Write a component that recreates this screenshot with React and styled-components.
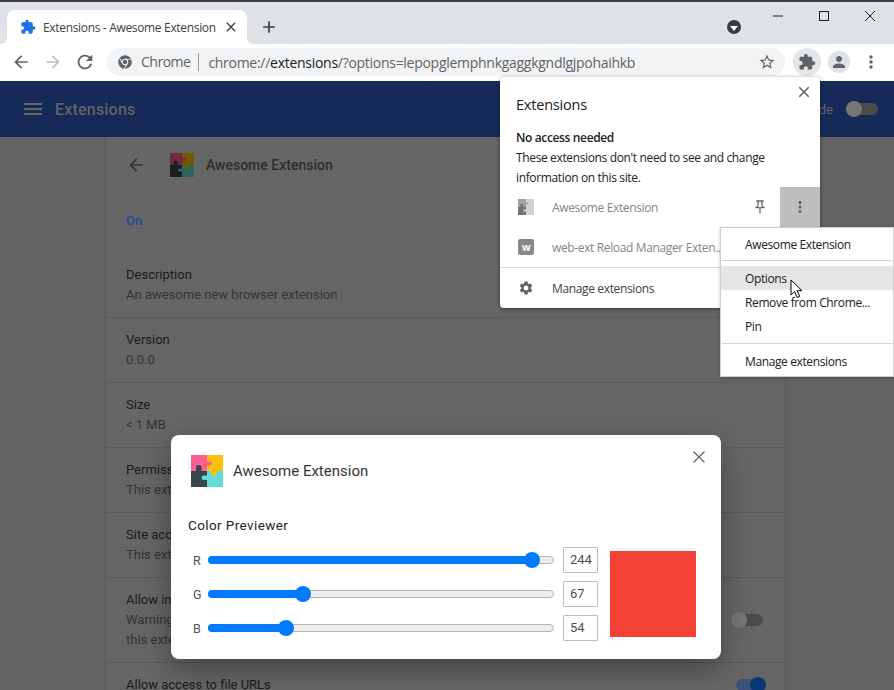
import styled, { createGlobalStyle } from "styled-components";
import { FaChrome } from "react-icons/fa";
import {
  MdAdd,
  MdArrowBack,
  MdArrowForward,
  MdClose,
  MdExtension,
  MdMenu,
  MdMoreVert,
  MdOutlinePushPin,
  MdPerson,
  MdRefresh,
  MdSettings,
  MdStarBorder,
} from "react-icons/md";
import { X } from "lucide-react";

const UI_FONT = `"Open Sans", "Noto Sans", sans-serif`;
const PAGE_FONT = `Roboto, "Liberation Sans", sans-serif`;

const GlobalStyle = createGlobalStyle`
  html, body {
    margin: 0;
    padding: 0;
    overflow: hidden;
    background: #666;
  }
  * {
    box-sizing: border-box;
  }
`;

const Window = styled.div`
  position: relative;
  width: 894px;
  height: 690px;
  overflow: hidden;
  display: flex;
  flex-direction: column;
  font-family: ${UI_FONT};
`;

const TabStrip = styled.div`
  height: 44px;
  flex: none;
  background: #dee1e6;
  border-top: 2px solid #3f3f3f;
  display: flex;
  align-items: flex-end;
  padding: 0 1px 0 7px;
`;

const Tab = styled.div`
  position: relative;
  width: 240px;
  height: 34px;
  background: #fff;
  border-radius: 8px 8px 0 0;
  display: flex;
  align-items: center;
  padding: 0 8px 0 13px;
  gap: 7px;
  color: #3c4043;

  svg {
    flex: none;
  }

  &::before,
  &::after {
    content: "";
    position: absolute;
    bottom: 0;
    width: 7px;
    height: 7px;
  }
  &::before {
    left: -7px;
    background: radial-gradient(circle at 0 0, transparent 7px, #fff 7.5px);
  }
  &::after {
    right: -7px;
    background: radial-gradient(circle at 100% 0, transparent 7px, #fff 7.5px);
  }
`;

const TabTitle = styled.span`
  flex: 1;
  min-width: 0;
  font-size: 12px;
  letter-spacing: -0.33px;
  white-space: nowrap;
  color: #3c4043;
`;

const NewTab = styled.div`
  margin-left: 12px;
  height: 34px;
  display: flex;
  align-items: center;
  color: #3c4043;
`;

const StripSpacer = styled.div`
  flex: 1;
`;

const ProfileDrop = styled.div`
  width: 14px;
  height: 14px;
  border-radius: 50%;
  background: #3c3c3c;
  margin: 0 0 10px;
  display: flex;
  align-items: center;
  justify-content: center;

  &::after {
    content: "";
    margin-top: 2px;
    border-left: 4px solid transparent;
    border-right: 4px solid transparent;
    border-top: 5px solid #fff;
  }
`;

const WindowControls = styled.div`
  align-self: flex-start;
  margin-left: 14px;
  display: flex;
`;

const WindowButton = styled.div`
  width: 46px;
  height: 28px;
  display: flex;
  align-items: center;
  justify-content: center;
  color: #1f1f1f;
`;

const Toolbar = styled.div`
  height: 37px;
  flex: none;
  background: #fff;
  display: flex;
  align-items: flex-start;
  padding: 4px 0 0 5px;
`;

const NavButton = styled.div`
  width: 32px;
  height: 28px;
  display: flex;
  align-items: center;
  justify-content: center;
  color: ${(p) => (p.$disabled ? "#bcbfc3" : "#5f6368")};
`;

const Omnibox = styled.div`
  width: 678px;
  height: 28px;
  margin-left: 6px;
  border-radius: 14px;
  background: #f1f3f4;
  display: flex;
  align-items: center;
  padding: 0 9px 0 11px;
  font-size: 14px;
  color: #5f6368;
  white-space: nowrap;
`;

const Origin = styled.span`
  margin-left: 9px;
  padding-right: 8px;
  border-right: 1px solid #9aa0a6;
  line-height: 18px;
  letter-spacing: -0.5px;
`;

const Url = styled.span`
  margin-left: 9px;
  flex: 1;
  letter-spacing: -0.28px;
`;

const UrlStrong = styled.span`
  color: #202124;
`;

const ToolbarActions = styled.div`
  display: flex;
  align-items: center;
  margin-left: 8px;
`;

const ActiveAction = styled.div`
  width: 28px;
  height: 28px;
  border-radius: 50%;
  background: #e4e5e7;
  display: flex;
  align-items: center;
  justify-content: center;
  color: #5f6368;
`;

const Avatar = styled.div`
  width: 22px;
  height: 22px;
  margin-left: 7px;
  border-radius: 50%;
  background: #dee1e6;
  color: #5f6368;
  display: flex;
  align-items: center;
  justify-content: center;
`;

const MenuDots = styled.div`
  margin-left: 11px;
  width: 20px;
  display: flex;
  justify-content: center;
  color: #5f6368;
`;

const Page = styled.div`
  flex: 1;
  min-height: 0;
  display: flex;
  flex-direction: column;
  background: #636363;
  font-family: ${PAGE_FONT};
`;

const PageHeader = styled.header`
  height: 56px;
  flex: none;
  background: #152a58;
  display: flex;
  align-items: center;
  padding: 0 16px 0 21px;
  color: #666;
`;

const PageTitle = styled.h1`
  margin: 0 0 0 10px;
  font-size: 16px;
  font-weight: 500;
  letter-spacing: 0.2px;
  color: #626366;
`;

const HeaderSpacer = styled.div`
  flex: 1;
`;

const DevMode = styled.span`
  font-size: 13px;
  margin-right: 15px;
  color: #66676a;
`;

const Toggle = styled.div`
  position: relative;
  width: 30px;
  height: 12px;
  border-radius: 6px;
  background: ${(p) => (p.$on ? "#3c5278" : "#4a4b4c")};

  &::after {
    content: "";
    position: absolute;
    top: -2px;
    left: ${(p) => (p.$on ? "14px" : "-2px")};
    width: 16px;
    height: 16px;
    border-radius: 50%;
    background: ${(p) => (p.$on ? "#0c3776" : "#777")};
  }
`;

const Card = styled.main`
  width: 681px;
  margin-left: 105px;
  flex: 1;
  background: #666;
  border-left: 1px solid #5a5a5a;
  border-right: 1px solid #5a5a5a;
  overflow: hidden;
`;

const DetailTop = styled.div`
  height: 56px;
  display: flex;
  align-items: center;
  padding-left: 20px;
  color: #333436;
`;

const DetailIcon = styled.div`
  margin-left: 24px;
  width: 24px;
  height: 24px;
  filter: brightness(0.45);
`;

const DetailName = styled.div`
  margin-left: 12px;
  font-size: 14px;
  font-weight: 500;
  color: #2c2d2f;
`;

const Status = styled.div`
  height: 72px;
  padding: 18px 20px 0;
  font-size: 13px;
  line-height: 20px;
  font-weight: 500;
  color: #2a4a96;
`;

const Row = styled.section`
  display: flex;
  align-items: center;
  gap: 20px;
  padding: ${(p) => (p.$first ? "0" : "12px")} 20px 12px;
  border-bottom: 1px solid #5b5b5b;
  font-size: 13px;
  line-height: 20px;
`;

const RowText = styled.div`
  width: ${(p) => p.$width || 590}px;
  flex: none;
`;

const RowLabel = styled.div`
  color: #1a1b1d;
  white-space: nowrap;
`;

const RowValue = styled.div`
  color: #333436;
  white-space: nowrap;
`;

const Dialog = styled.div`
  position: absolute;
  left: 171px;
  top: 435px;
  width: 550px;
  height: 224px;
  background: #fff;
  border-radius: 8px;
  box-shadow: 0 10px 30px rgba(0, 0, 0, 0.35);
  padding: 20px 25px 0 17px;
  font-family: ${PAGE_FONT};
`;

const DialogClose = styled.div`
  position: absolute;
  top: 12px;
  right: 12px;
  color: #666;
  display: flex;
`;

const DialogHead = styled.div`
  display: flex;
  align-items: center;
  gap: 10px;
  padding-left: 3px;
`;

const DialogTitle = styled.div`
  font-size: 15px;
  color: #33363a;
`;

const SectionTitle = styled.div`
  margin-top: 29px;
  font-size: 13.5px;
  line-height: 18px;
  letter-spacing: 0.4px;
  color: #212529;
`;

const PreviewArea = styled.div`
  margin-top: 13px;
  display: flex;
  gap: 12px;
  align-items: center;
`;

const Sliders = styled.div`
  display: flex;
  flex-direction: column;
  gap: 8px;
`;

const SliderRow = styled.div`
  display: flex;
  align-items: center;
  height: 26px;
`;

const ChannelLabel = styled.div`
  width: 20px;
  padding-left: 5px;
  font-size: 12.5px;
  color: #495057;
`;

const Track = styled.div`
  position: relative;
  width: 346px;
  height: 8px;
  border-radius: 4px;
  background: #eee;
  border: 1px solid #b5b5b5;
`;

const TrackFill = styled.div`
  position: absolute;
  left: -1px;
  top: -1px;
  height: 8px;
  border-radius: 4px;
  background: #007bff;
`;

const Thumb = styled.div`
  position: absolute;
  top: -5px;
  width: 16px;
  height: 16px;
  border-radius: 50%;
  background: #007bff;
`;

const ValueBox = styled.div`
  width: 35px;
  height: 26px;
  margin-left: 9px;
  border: 1px solid #bdbdbd;
  border-radius: 1px;
  padding-left: 6px;
  font-size: 13px;
  line-height: 24px;
  color: #495057;
`;

const Swatch = styled.div`
  width: 86px;
  height: 86px;
  background: ${(p) => p.$color};
`;

const Popup = styled.div`
  position: absolute;
  left: 500px;
  top: 77px;
  width: 320px;
  height: 231px;
  background: #fff;
  border-radius: 4px;
  box-shadow: 0 1px 4px rgba(0, 0, 0, 0.45);
  font-size: 12px;
  letter-spacing: -0.36px;
  color: #202124;
`;

const PopupHead = styled.div`
  height: 51px;
  padding: 18px 16px 0;
  font-size: 14.5px;
  letter-spacing: -0.2px;
  line-height: 20px;
`;

const PopupClose = styled.div`
  position: absolute;
  top: 6px;
  right: 7px;
  display: flex;
  color: #5f6368;
`;

const Notice = styled.div`
  padding: 0 16px;
  line-height: 20px;
  height: 59px;
`;

const NoticeTitle = styled.div`
  font-weight: 600;
`;

const ExtRow = styled.div`
  height: 40px;
  display: flex;
  align-items: center;
  padding-left: 18px;
  color: #80868b;
`;

const ExtName = styled.div`
  flex: 1;
  margin-left: 18px;
  white-space: nowrap;
`;

const PinButton = styled.div`
  width: 40px;
  display: flex;
  justify-content: center;
  color: #6b6b6b;
`;

const KebabButton = styled.div`
  width: 40px;
  height: 40px;
  background: #bebebe;
  display: flex;
  align-items: center;
  justify-content: center;
  color: #5f6368;
`;

const GreyedIcon = styled.div`
  width: 16px;
  height: 16px;
  filter: grayscale(1) opacity(0.75);
`;

const WebExtIcon = styled.div`
  width: 16px;
  height: 16px;
  border-radius: 2px;
  background: #8a8a8a;
  color: #fff;
  font-size: 10px;
  font-weight: 700;
  line-height: 16px;
  text-align: center;
`;

const PopupDivider = styled.div`
  height: 1px;
  background: #dadce0;
`;

const ManageRow = styled.div`
  height: 40px;
  display: flex;
  align-items: center;
  padding-left: 18px;
  gap: 18px;
  color: #3c4043;
`;

const ContextMenu = styled.div`
  position: absolute;
  left: 720px;
  top: 227px;
  width: 174px;
  height: 150px;
  background: #fff;
  border: 1px solid #cfcfcf;
  box-shadow: 0 1px 3px rgba(0, 0, 0, 0.25);
  font-size: 12px;
  letter-spacing: -0.38px;
  color: #202124;
  padding-top: 4px;
`;

const MenuItem = styled.div`
  height: 24px;
  line-height: 26px;
  padding-left: 24px;
  white-space: nowrap;
  background: ${(p) => (p.$active ? "#e5e5e5" : "transparent")};
`;

const MenuSeparator = styled.div`
  height: 1px;
  margin: ${(p) => p.$top}px 0 5px 1px;
  background: #d4d4d4;
`;

const Cursor = styled.svg`
  position: absolute;
  left: 790px;
  top: 279px;
`;

const CHANNELS = [
  { label: "R", value: 244 },
  { label: "G", value: 67 },
  { label: "B", value: 54 },
];

const ROWS = [
  { label: "Version", value: "0.0.0" },
  { label: "Size", value: "< 1 MB" },
  { label: "Permissions", value: "This extension has no special permissions" },
  { label: "Site access", value: "This extension has no additional site access" },
];

function PuzzleLogo({ size = 32 }) {
  return (
    <svg width={size} height={size} viewBox="0 0 32 32" style={{ display: "block" }}>
      <rect width="16" height="16" fill="#ff5e93" />
      <rect x="16" width="16" height="16" fill="#ffc107" />
      <rect y="16" width="16" height="16" fill="#37474f" />
      <rect x="16" y="16" width="16" height="16" fill="#64dbd6" />
      <rect x="14" y="6.5" width="7" height="4" rx="2" fill="#ff5e93" />
      <rect x="20.5" y="14" width="5" height="7" rx="2.4" fill="#ffc107" />
      <rect x="5" y="10" width="5.5" height="8" rx="2.6" fill="#37474f" />
      <rect x="10.5" y="20.5" width="7" height="4.5" rx="2.2" fill="#64dbd6" />
    </svg>
  );
}

function Channel({ label, value }) {
  const offset = (value / 255) * 330;
  return (
    <SliderRow>
      <ChannelLabel>{label}</ChannelLabel>
      <Track>
        <TrackFill style={{ width: offset + 8 }} />
        <Thumb style={{ left: offset - 1 }} />
      </Track>
      <ValueBox>{value}</ValueBox>
    </SliderRow>
  );
}

export default function App() {
  return (
    <Window>
      <GlobalStyle />
      <TabStrip>
        <Tab>
          <MdExtension size={16} color="#1a73e8" />
          <TabTitle>Extensions - Awesome Extension</TabTitle>
          <MdClose size={16} color="#3c4043" />
        </Tab>
        <NewTab>
          <MdAdd size={20} />
        </NewTab>
        <StripSpacer />
        <ProfileDrop />
        <WindowControls>
          <WindowButton>
            <svg width="10" height="10" viewBox="0 0 10 10">
              <path d="M0 5h10" stroke="currentColor" fill="none" />
            </svg>
          </WindowButton>
          <WindowButton>
            <svg width="10" height="10" viewBox="0 0 10 10">
              <rect x="0.5" y="0.5" width="9" height="9" stroke="currentColor" fill="none" />
            </svg>
          </WindowButton>
          <WindowButton>
            <svg width="10" height="10" viewBox="0 0 10 10">
              <path d="M0 0l10 10M10 0L0 10" stroke="currentColor" fill="none" />
            </svg>
          </WindowButton>
        </WindowControls>
      </TabStrip>

      <Toolbar>
        <NavButton>
          <MdArrowBack size={20} />
        </NavButton>
        <NavButton $disabled>
          <MdArrowForward size={20} />
        </NavButton>
        <NavButton>
          <MdRefresh size={22} />
        </NavButton>
        <Omnibox>
          <FaChrome size={14} color="#5f6368" />
          <Origin>Chrome</Origin>
          <Url>
            chrome://<UrlStrong>extensions</UrlStrong>/?options=lepopglemphnkgaggkgndlgjpohaihkb
          </Url>
          <MdStarBorder size={18} />
        </Omnibox>
        <ToolbarActions>
          <ActiveAction>
            <MdExtension size={18} />
          </ActiveAction>
          <Avatar>
            <MdPerson size={18} />
          </Avatar>
          <MenuDots>
            <MdMoreVert size={20} />
          </MenuDots>
        </ToolbarActions>
      </Toolbar>

      <Page>
        <PageHeader>
          <MdMenu size={24} />
          <PageTitle>Extensions</PageTitle>
          <HeaderSpacer />
          <DevMode>Developer mode</DevMode>
          <Toggle />
        </PageHeader>
        <Card>
          <DetailTop>
            <MdArrowBack size={20} />
            <DetailIcon>
              <PuzzleLogo size={24} />
            </DetailIcon>
            <DetailName>Awesome Extension</DetailName>
          </DetailTop>
          <Status>On</Status>
          <Row $first>
            <RowText>
              <RowLabel>Description</RowLabel>
              <RowValue>An awesome new browser extension</RowValue>
            </RowText>
          </Row>
          {ROWS.map((row) => (
            <Row key={row.label}>
              <RowText>
                <RowLabel>{row.label}</RowLabel>
                <RowValue>{row.value}</RowValue>
              </RowText>
            </Row>
          ))}
          <Row>
            <RowText $width={587}>
              <RowLabel>Allow in incognito</RowLabel>
              <RowValue>
                Warning: Google Chrome cannot prevent extensions from recording your browsing
              </RowValue>
              <RowValue>this extension in incognito mode, unselect this option.</RowValue>
            </RowText>
            <Toggle />
          </Row>
          <Row>
            <RowText>
              <RowLabel>Allow access to file URLs</RowLabel>
            </RowText>
            <Toggle $on />
          </Row>
        </Card>
      </Page>

      <Dialog>
        <DialogClose>
          <X size={20} strokeWidth={1.5} />
        </DialogClose>
        <DialogHead>
          <PuzzleLogo />
          <DialogTitle>Awesome Extension</DialogTitle>
        </DialogHead>
        <SectionTitle>Color Previewer</SectionTitle>
        <PreviewArea>
          <Sliders>
            {CHANNELS.map((c) => (
              <Channel key={c.label} {...c} />
            ))}
          </Sliders>
          <Swatch $color="#f44336" />
        </PreviewArea>
      </Dialog>

      <Popup>
        <PopupClose>
          <MdClose size={18} />
        </PopupClose>
        <PopupHead>Extensions</PopupHead>
        <Notice>
          <NoticeTitle>No access needed</NoticeTitle>
          These extensions don't need to see and change information on this site.
        </Notice>
        <ExtRow>
          <GreyedIcon>
            <PuzzleLogo size={16} />
          </GreyedIcon>
          <ExtName>Awesome Extension</ExtName>
          <PinButton>
            <MdOutlinePushPin size={16} />
          </PinButton>
          <KebabButton>
            <MdMoreVert size={18} />
          </KebabButton>
        </ExtRow>
        <ExtRow>
          <WebExtIcon>w</WebExtIcon>
          <ExtName>web-ext Reload Manager Exten...</ExtName>
        </ExtRow>
        <PopupDivider />
        <ManageRow>
          <MdSettings size={16} color="#5f6368" />
          Manage extensions
        </ManageRow>
      </Popup>

      <ContextMenu>
        <MenuItem>Awesome Extension</MenuItem>
        <MenuSeparator $top={4} />
        <MenuItem $active>Options</MenuItem>
        <MenuItem>Remove from Chrome...</MenuItem>
        <MenuItem>Pin</MenuItem>
        <MenuSeparator $top={5} />
        <MenuItem>Manage extensions</MenuItem>
      </ContextMenu>

      <Cursor width="14" height="20" viewBox="0 0 14 20">
        <path
          d="M1 1v15l3.6-3.4 2.5 5.8 2.6-1.1-2.5-5.6H12z"
          fill="#fff"
          stroke="#000"
          strokeWidth="1"
        />
      </Cursor>
    </Window>
  );
}
